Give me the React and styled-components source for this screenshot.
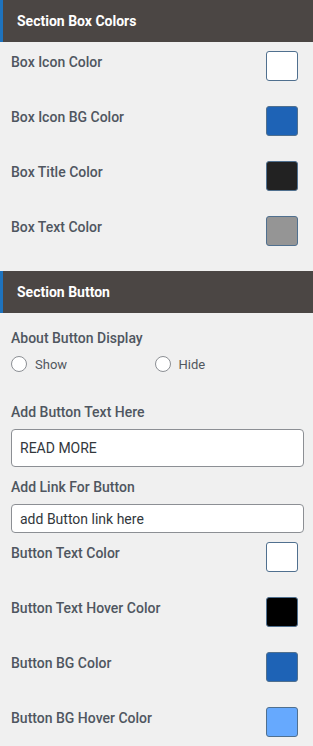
import React from "react"
import styled, { createGlobalStyle } from "styled-components"

const GlobalStyle = createGlobalStyle`
    body {
        margin: 0;
        background: #f0f0f0;
        font-family: Roboto, "Liberation Sans", sans-serif;
    }
`

const Panel = styled.div`
    width: 313px;
    background: #f0f0f0;
`

const SectionHead = styled.div`
    height: 42px;
    display: flex;
    align-items: center;
    padding-left: 14px;
    background: #4b4644;
    border-left: 3px solid #1e73be;
    color: #fff;
    font-size: 14px;
    font-weight: 700;
`

const SectionBody = styled.div`
    padding: ${p => p.top || 0}px 15px 0 11px;
`

const ColorRow = styled.div`
    display: flex;
    justify-content: space-between;
    align-items: flex-start;
    height: 55px;
`

const Label = styled.div`
    color: #4f5660;
    font-size: 14px;
    font-weight: 500;
    line-height: ${p => p.lh || 20}px;
    margin-top: ${p => p.mt || 0}px;
`

const Swatch = styled.div`
    width: 30px;
    height: 28px;
    border: 1px solid #50708f;
    border-radius: 3px;
    background: ${p => p.color};
`

const RadioGroup = styled.div`
    display: flex;
    margin-top: 6px;
    height: 20px;
    align-items: center;
`

const RadioItem = styled.label`
    display: flex;
    align-items: center;
    width: 144px;
    color: #50575e;
    font-size: 13px;
`

const Circle = styled.span`
    width: 14px;
    height: 14px;
    border: 1px solid #8c8f94;
    border-radius: 50%;
    background: #fff;
    margin-right: 8px;
`

const Input = styled.div`
    margin: 7px -6px 0 0;
    height: ${p => p.h}px;
    box-sizing: border-box;
    border: 1px solid #8c8f94;
    border-radius: 4px;
    background: #fff;
    display: flex;
    align-items: center;
    padding-left: 8px;
    color: #32373c;
    font-size: 14px;
`

const Spacer = styled.div`
    height: 9px;
`

const boxColors = [
    { name: "Box Icon Color", color: "#ffffff" },
    { name: "Box Icon BG Color", color: "#1e63b6" },
    { name: "Box Title Color", color: "#222222" },
    { name: "Box Text Color", color: "#959595" },
]

const buttonColors = [
    { name: "Button Text Color", color: "#ffffff" },
    { name: "Button Text Hover Color", color: "#000000" },
    { name: "Button BG Color", color: "#1e63b6" },
    { name: "Button BG Hover Color", color: "#66a9fe" },
]

const Rows = ({ items }) => items.map(item =>
    <ColorRow key={item.name}>
        <Label lh={22}>{item.name}</Label>
        <Swatch color={item.color} />
    </ColorRow>
)

const App = () => (
    <Panel>
        <GlobalStyle />
        <SectionHead>Section Box Colors</SectionHead>
        <SectionBody top={9}>
            <Rows items={boxColors} />
        </SectionBody>
        <SectionHead>Section Button</SectionHead>
        <SectionBody>
            <Label mt={15}>About Button Display</Label>
            <RadioGroup>
                <RadioItem><Circle />Show</RadioItem>
                <RadioItem><Circle />Hide</RadioItem>
            </RadioGroup>
            <Label mt={28}>Add Button Text Here</Label>
            <Input h={38}>READ MORE</Input>
            <Label mt={10}>Add Link For Button</Label>
            <Input h={29}>add Button link here</Input>
            <Spacer />
            <Rows items={buttonColors} />
        </SectionBody>
    </Panel>
)

export default App
